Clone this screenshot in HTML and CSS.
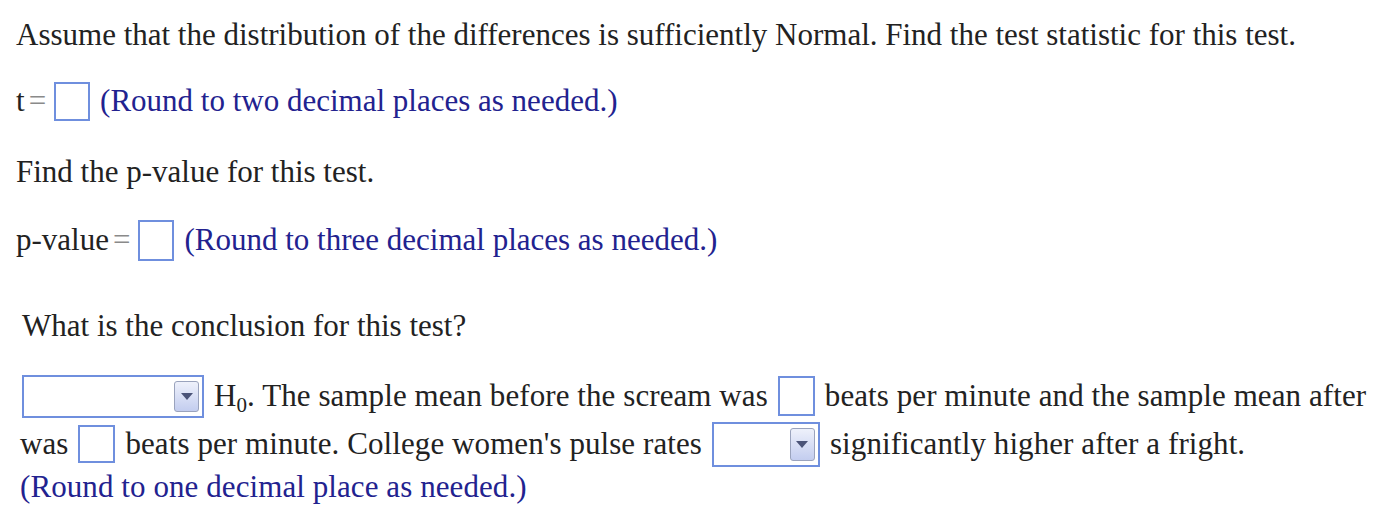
FILE: index.html
```html
<!DOCTYPE html>
<html>
<head>
<meta charset="utf-8">
<link rel="stylesheet" href="styles.css">
</head>
<body>
<div class="page">
  <div class="line l1">Assume that the distribution of the differences is sufficiently Normal. Find the test statistic for this test.</div>
  <div class="line l2"><span class="eqlabel">t<span class="eq">=</span></span><span class="box b-t"></span><span class="hint">(Round to two decimal places as needed.)</span></div>
  <div class="line l3">Find the p-value for this test.</div>
  <div class="line l4"><span class="eqlabel">p-value<span class="eq">=</span></span><span class="box b-p"></span><span class="hint">(Round to three decimal places as needed.)</span></div>
  <div class="line l5">What is the conclusion for this test?</div>
  <div class="concl">
    <div class="cline c1"><span class="select s1"><span class="arrow"></span></span><span class="txt">H<sub>0</sub>. The sample mean before the scream was</span><span class="box b-a"></span><span class="txt">beats per minute and the sample mean after</span></div>
    <div class="cline c2"><span class="txt">was</span><span class="box b-b"></span><span class="txt">beats per minute. College women's pulse rates</span><span class="select s2"><span class="arrow"></span></span><span class="txt">significantly higher after a fright.</span></div>
    <div class="cline c3"><span class="hint">(Round to one decimal place as needed.)</span></div>
  </div>
</div>
</body>
</html>
```
FILE: styles.css
```css
html, body {
  margin: 0;
  padding: 0;
  background: #ffffff;
}
.page {
  font-family: "Liberation Serif", "Times New Roman", serif;
  font-size: 31px;
  color: #222222;
  padding-left: 16px;
}
.line {
  display: flex;
  align-items: center;
  white-space: nowrap;
}
.l1 { height: 34px; margin-top: 18px; }
.l2 { height: 40px; margin-top: 29px; }
.l3 { height: 34px; margin-top: 34px; }
.l4 { height: 42px; margin-top: 30px; }
.l5 { height: 34px; margin-top: 48px; padding-left: 6px; }
.eqlabel { display: inline-flex; align-items: center; }
.eq {
  color: #8a8a8a;
  font-size: 31px;
  margin-left: 4px;
  margin-right: 8px;
}
.box {
  display: inline-block;
  box-sizing: border-box;
  width: 36px;
  height: 39px;
  border: 2px solid #6f8fde;
  background: #fff;
  flex: none;
}
.hint {
  color: #22228f;
  margin-left: 10px;
}
.b-p { width: 36px; height: 41px; }
.concl {
  padding-left: 4px;
  margin-top: 31px;
  letter-spacing: 0.08px;
}
.cline {
  display: flex;
  align-items: center;
  white-space: nowrap;
}
.c1 { height: 44px; padding-left: 2px; }
.c2 { height: 46px; margin-top: 3px; }
.c3 { height: 36px; margin-top: 2px; }
.c3 .hint { margin-left: 0; }
.txt { margin: 0 10px; }
.c2 .txt:first-child { margin-left: 0; }
.c1 .txt:last-child, .c2 .txt:last-child { margin-right: 0; }
sub { font-size: 21px; vertical-align: -6px; line-height: 0; }
.select {
  position: relative;
  display: inline-block;
  box-sizing: border-box;
  border: 2px solid #6f8fde;
  background: #fff;
  flex: none;
}
.s1 { width: 182px; height: 43px; }
.s2 { width: 108px; height: 45px; }
.arrow {
  position: absolute;
  right: 3px;
  top: 4px;
  bottom: 4px;
  width: 25px;
  box-sizing: border-box;
  border: 1px solid #9aa3bd;
  border-radius: 3px;
  background: linear-gradient(#eef1fb, #c3cdef);
}
.arrow::after {
  content: "";
  position: absolute;
  left: 50%;
  top: 50%;
  margin-left: -6px;
  margin-top: -3px;
  border-left: 6px solid transparent;
  border-right: 6px solid transparent;
  border-top: 7px solid #4b5478;
}
.b-b { width: 37px; height: 38px; }
.b-a { width: 37px; height: 40px; }
```
